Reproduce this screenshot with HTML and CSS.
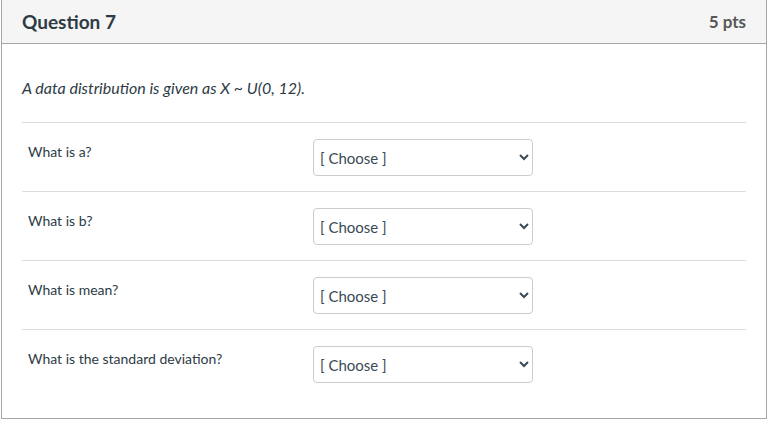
FILE: index.html
```html
<!DOCTYPE html>
<html>
<head>
<meta charset="utf-8">
<link rel="stylesheet" href="styles.css">
</head>
<body>
<div class="question">
  <div class="header">
    <span class="title">Question 7</span>
    <span class="pts">5 pts</span>
  </div>
  <div class="content">
    <p class="stem">A data distribution is given as X ~ U(0, 12).</p>
    <div class="row">
      <div class="label">What is a?</div>
      <select class="choice"><option>[ Choose ]</option></select>
    </div>
    <div class="row">
      <div class="label">What is b?</div>
      <select class="choice"><option>[ Choose ]</option></select>
    </div>
    <div class="row">
      <div class="label">What is mean?</div>
      <select class="choice"><option>[ Choose ]</option></select>
    </div>
    <div class="row">
      <div class="label">What is the standard deviation?</div>
      <select class="choice"><option>[ Choose ]</option></select>
    </div>
  </div>
</div>
</body>
</html>
```
FILE: styles.css
```css
html, body { margin: 0; padding: 0; background: #fff; }
body { font-family: Lato, "Liberation Sans", sans-serif; color: #2d3b45; }
.question {
  margin-left: 1px;
  width: 764px;
  border: 1px solid #a5a5a5;
  border-top: none;
}
.header {
  height: 43px;
  background: #f5f5f5;
  border-bottom: 1px solid #a5a5a5;
  display: flex;
  justify-content: space-between;
  align-items: center;
  padding: 0 20px 0 20px;
}
.title { font-size: 19px; font-weight: 700; color: #2d3b45; }
.pts { font-size: 17px; font-weight: 700; color: #575757; }
.content { padding: 0 20px 20px 20px; }
.stem {
  margin: 0;
  padding-top: 33px;
  padding-bottom: 23px;
  font-size: 16px;
  line-height: 22px;
  font-style: italic;
}
.row {
  display: flex;
  align-items: flex-start;
  border-top: 1px solid #dcdcdc;
  padding: 16px 0 15px 6px;
}
.label {
  width: 285px;
  padding-top: 3px;
  font-size: 14px;
  line-height: 20px;
}
.choice {
  width: 220px;
  height: 37px;
  border: 1px solid #c7cdd1;
  border-radius: 4px;
  background: #fff;
  font-family: Lato, "Liberation Sans", sans-serif;
  font-size: 15px;
  color: #3b4a55;
  padding: 0 2px;
}
```
